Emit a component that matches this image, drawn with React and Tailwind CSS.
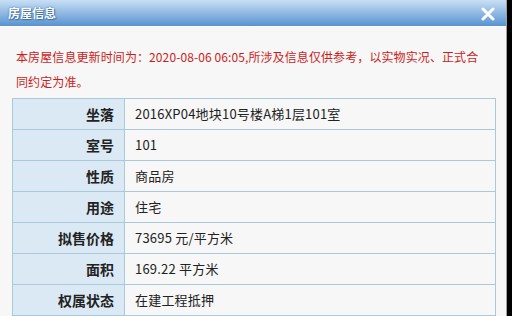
import React from "react";

const rows = [
  ["坐落", "2016XP04地块10号楼A梯1层101室"],
  ["室号", "101"],
  ["性质", "商品房"],
  ["用途", "住宅"],
  ["拟售价格", "73695 元/平方米"],
  ["面积", "169.22 平方米"],
  ["权属状态", "在建工程抵押"],
];

export default function App() {
  return (
    <div className="w-[512px] h-[316px] overflow-hidden bg-black flex font-['Microsoft_YaHei','Noto_Sans_CJK_SC',sans-serif]">
      <div className="w-[507px] h-full bg-[#f7f7f7] border-r border-[#a0a0a0] flex flex-col">
        {/* title bar */}
        <div className="h-[27px] shrink-0 bg-gradient-to-b from-[#c8dff4] to-[#5893d0] border-b border-[#fdfdfd] flex items-center justify-between pl-[8px] pr-[11px]">
          <span className="text-white font-bold text-[12px] leading-none [text-shadow:0_0_2px_#3b6fa3,1px_1px_1px_#3b6fa3]">房屋信息</span>
          <svg width="14" height="14" viewBox="0 0 14 14" className="mt-[1px]">
            <path d="M2 2 L12 12 M12 2 L2 12" stroke="#ffffff" strokeWidth="3" strokeLinecap="round" />
          </svg>
        </div>

        {/* notice */}
        <p className="pt-[17px] pl-[16px] pr-[20px] text-[12px] leading-[25px] text-[#cc1d1d] tracking-[0.1px]">
          本房屋信息更新时间为：2020-08-06 06:05,所涉及信息仅供参考，以实物实况、正式合同约定为准。
        </p>

        {/* table */}
        <div className="mt-[4px] ml-[12px] w-[484px] border-t border-l border-r border-[#a9c9dd]">
          {rows.map(([k, v]) => (
            <div key={k} className="grid grid-cols-[112px_1fr] h-[31px] border-b border-[#a9c9dd]">
              <div className="bg-[#dbe9f5] border-r border-[#a9c9dd] flex items-center justify-end pr-[10px] text-[14px] font-bold text-[#222]">
                {k}
              </div>
              <div className="flex items-center pl-[10px] text-[13px] tracking-[0.2px] text-[#222]">{v}</div>
            </div>
          ))}
        </div>
      </div>
    </div>
  );
}
